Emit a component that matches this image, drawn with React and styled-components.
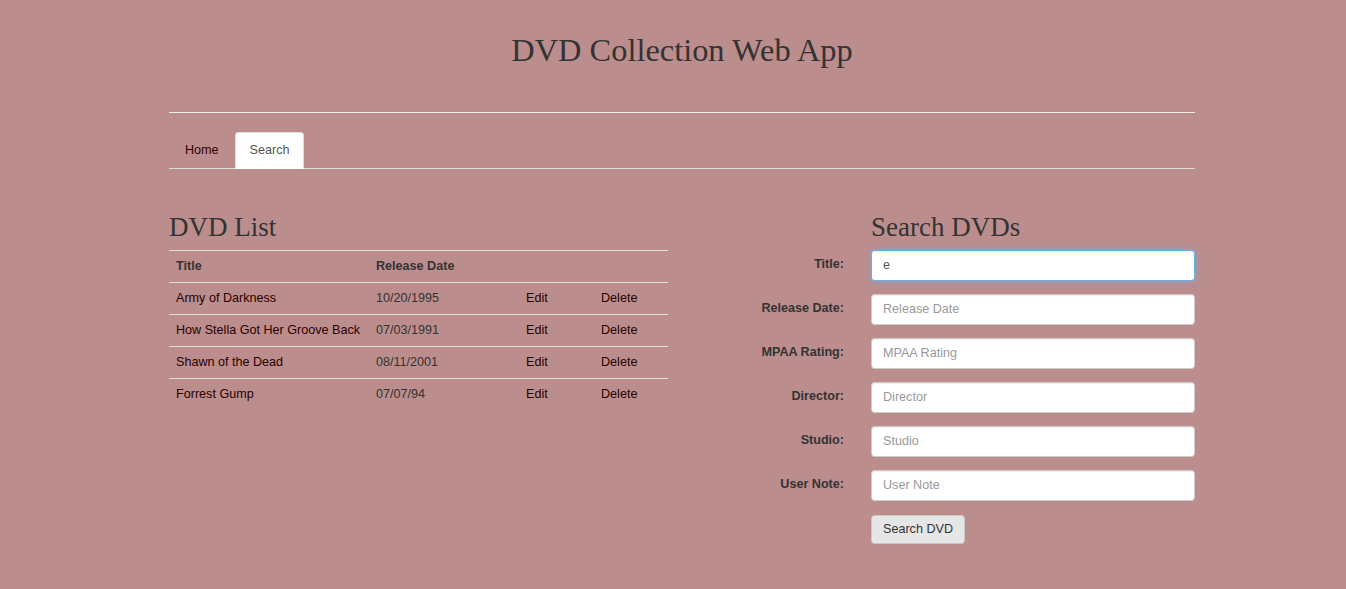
import React from 'react';
import styled, { createGlobalStyle } from 'styled-components';

const GlobalStyle = createGlobalStyle`
  html, body {
    margin: 0;
    padding: 0;
    background-color: #bc8d8d;
  }
  body {
    font-family: "Liberation Sans", Arial, sans-serif;
    font-size: 12.6px;
    line-height: 1.42857;
    color: #333;
  }
  * {
    box-sizing: border-box;
  }
`;

const Container = styled.div`
  width: 1026px;
  margin-left: 169px;
`;

const PageTitle = styled.h1`
  font-family: "Liberation Serif", "Times New Roman", serif;
  font-weight: 400;
  font-size: 32.4px;
  line-height: 1.1;
  color: #333;
  text-align: center;
  margin: 0;
  padding-top: 33px;
  padding-bottom: 43px;
`;

const Rule = styled.hr`
  border: 0;
  border-top: 1px solid #eee;
  margin: 0 0 19px;
`;

const Tabs = styled.ul`
  list-style: none;
  display: flex;
  margin: 0;
  padding: 0 0 0 1px;
  border-bottom: 1px solid #ddd;
  height: 37px;
`;

const Tab = styled.li`
  margin-bottom: -1px;
`;

const TabLink = styled.a`
  display: block;
  height: 37px;
  padding: 0 13px 0 14px;
  line-height: 35px;
  border: 1px solid ${p => (p.$active ? '#ddd' : 'transparent')};
  border-bottom-color: ${p => (p.$active ? '#fff' : 'transparent')};
  border-radius: 3.6px 3.6px 0 0;
  background: ${p => (p.$active ? '#fff' : 'transparent')};
  color: ${p => (p.$active ? '#555' : '#330000')};
  text-decoration: none;
  margin-right: 2px;
`;

const Main = styled.div`
  display: grid;
  grid-template-columns: 499px 1fr;
  padding-top: 44px;
`;

const Heading = styled.h2`
  font-family: "Liberation Serif", "Times New Roman", serif;
  font-weight: 400;
  font-size: 27px;
  line-height: 1.1;
  color: #333;
  margin: 0 0 7px;
  height: 30px;
`;

const Table = styled.table`
  width: 100%;
  border-collapse: collapse;
`;

const Th = styled.th`
  text-align: left;
  font-weight: 700;
  color: #333;
  padding: 1px 7px 0;
  height: 32px;
  border-top: 1px solid #ddd;
  width: ${p => p.$w || 'auto'};
`;

const Td = styled.td`
  padding: 1px 7px 0;
  height: 32px;
  border-top: 1px solid #ddd;
  color: ${p => (p.$muted ? '#333' : '#2a0000')};
  white-space: nowrap;
`;

const Form = styled.div`
  display: grid;
  grid-template-columns: 176px 324px;
  column-gap: 27px;
  row-gap: 13px;
  align-items: center;
`;

const FormHeading = styled(Heading)`
  grid-column: 2;
  margin-bottom: -6px;
`;

const Label = styled.label`
  text-align: right;
  font-weight: 700;
  color: #333;
  padding-bottom: 1px;
`;

const Input = styled.input`
  display: block;
  width: 100%;
  height: 31px;
  padding: 5px 11px;
  font-family: "Liberation Sans", Arial, sans-serif;
  font-size: 12.6px;
  color: #555;
  background: #fff;
  border: 1px solid ${p => (p.$focus ? '#66afe9' : '#ccc')};
  border-radius: 3.6px;
  box-shadow: ${p =>
    p.$focus
      ? 'inset 0 1px 1px rgba(0,0,0,.075), 0 0 7px rgba(102,175,233,.6)'
      : 'inset 0 1px 1px rgba(0,0,0,.075)'};
  outline: none;
  &::placeholder {
    color: #999;
  }
`;

const Button = styled.button`
  grid-column: 2;
  justify-self: start;
  height: 29px;
  padding: 0 11px;
  font-family: "Liberation Sans", Arial, sans-serif;
  font-size: 12.6px;
  color: #333;
  background: #e6e6e6;
  border: 1px solid #c8c8c8;
  border-radius: 3.6px;
  margin-top: 1px;
`;

const dvds = [
  { title: 'Army of Darkness', date: '10/20/1995' },
  { title: 'How Stella Got Her Groove Back', date: '07/03/1991' },
  { title: 'Shawn of the Dead', date: '08/11/2001' },
  { title: 'Forrest Gump', date: '07/07/94' },
];

const fields = ['Release Date', 'MPAA Rating', 'Director', 'Studio', 'User Note'];

const App = () => (
  <>
    <GlobalStyle />
    <Container>
      <PageTitle>DVD Collection Web App</PageTitle>
      <Rule />
      <Tabs>
        <Tab><TabLink href="#">Home</TabLink></Tab>
        <Tab><TabLink href="#" $active>Search</TabLink></Tab>
      </Tabs>
      <Main>
        <div>
          <Heading>DVD List</Heading>
          <Table>
            <thead>
              <tr>
                <Th $w="200px">Title</Th>
                <Th $w="150px">Release Date</Th>
                <Th $w="75px"></Th>
                <Th></Th>
              </tr>
            </thead>
            <tbody>
              {dvds.map(d => (
                <tr key={d.title}>
                  <Td>{d.title}</Td>
                  <Td $muted>{d.date}</Td>
                  <Td>Edit</Td>
                  <Td>Delete</Td>
                </tr>
              ))}
            </tbody>
          </Table>
        </div>
        <Form>
          <FormHeading>Search DVDs</FormHeading>
          <Label>Title:</Label>
          <Input $focus defaultValue="e" autoFocus />
          {fields.map(f => (
            <React.Fragment key={f}>
              <Label>{f}:</Label>
              <Input placeholder={f} />
            </React.Fragment>
          ))}
          <Button>Search DVD</Button>
        </Form>
      </Main>
    </Container>
  </>
);

export default App;
